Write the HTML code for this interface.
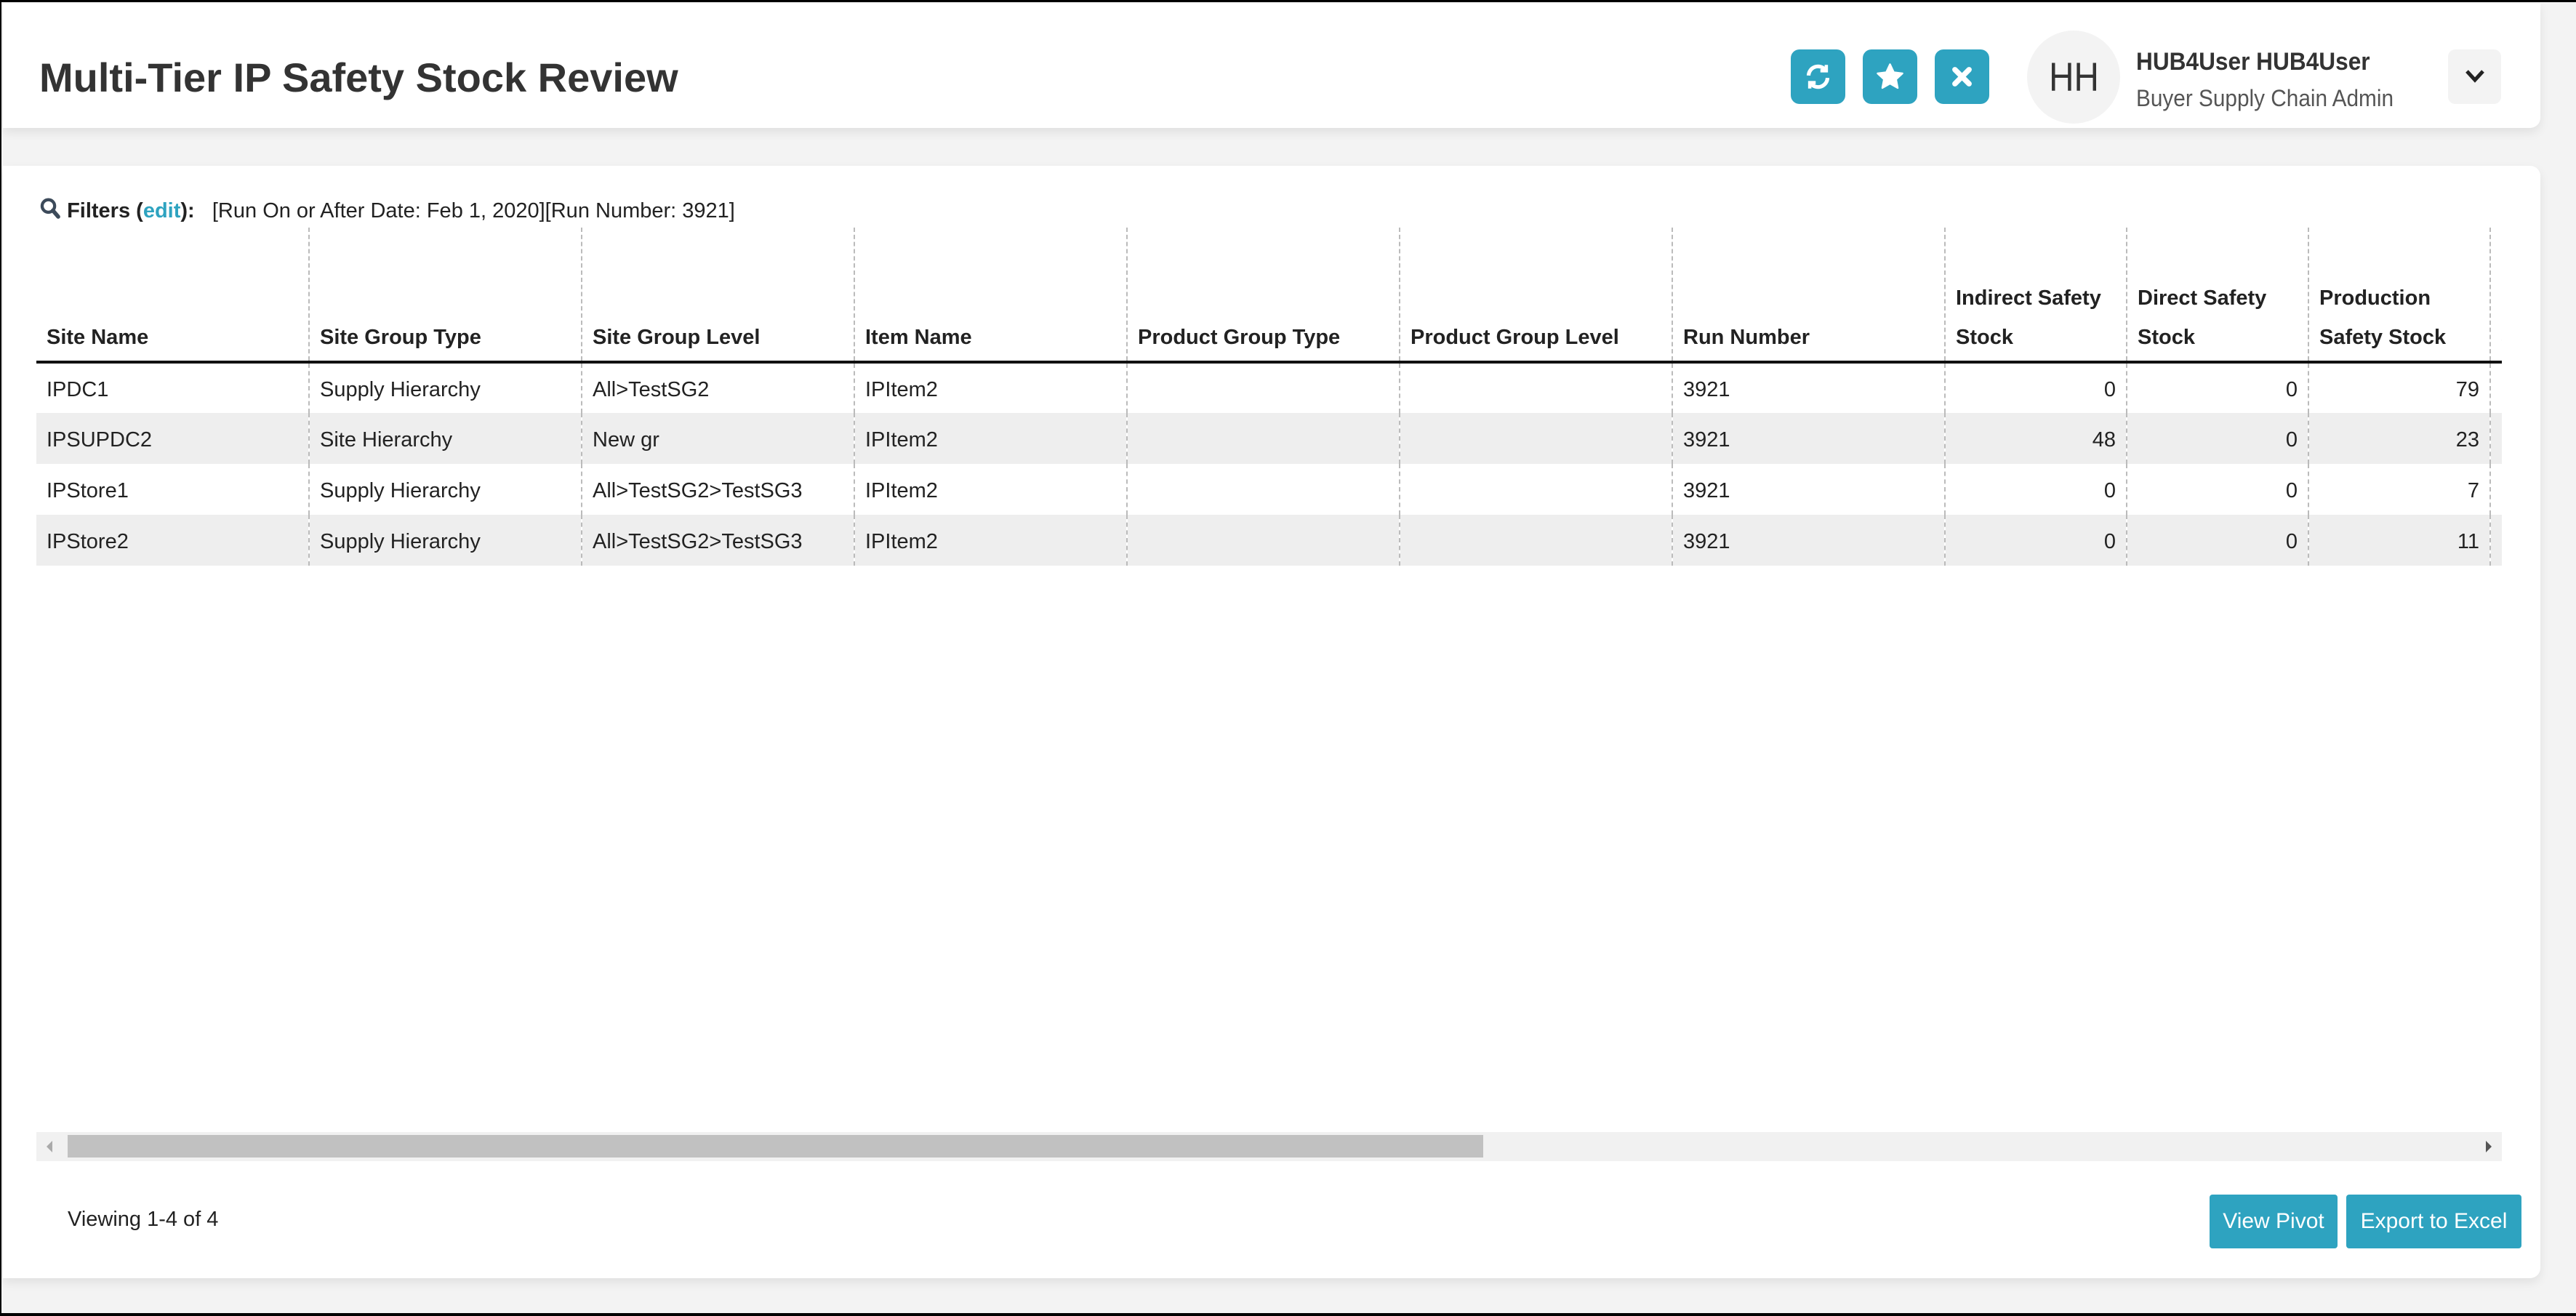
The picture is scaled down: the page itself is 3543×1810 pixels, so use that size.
<!DOCTYPE html>
<html><head><meta charset="utf-8">
<style>
*{box-sizing:border-box;margin:0;padding:0}
html,body{width:3543px;height:1810px;overflow:hidden}
body{background:#f3f3f3;font-family:"Liberation Sans",sans-serif;color:#222;position:relative;border-top:3px solid #000;border-left:2px solid #000;border-bottom:4px solid #000}
.card{position:absolute;background:#fff;box-shadow:0 6px 14px rgba(0,0,0,.08);border-radius:0 0 14px 0}
.sx{display:inline-block;transform-origin:0 50%;white-space:nowrap}
.btn{position:absolute;width:75px;height:75px;border-radius:12px;background:#2ea3c0;top:64px}
.btn svg{position:absolute;left:18px;top:18px}
table{border-collapse:collapse;position:absolute;left:48px;top:310px;table-layout:fixed;width:3625px}
td,th{font-size:29px;padding:0 14px;white-space:nowrap;overflow:hidden;border-right:2px dashed #bbb}
th{height:185px;vertical-align:bottom;text-align:left;font-weight:bold;padding-bottom:5px;line-height:54px;border-bottom:4px solid #111;white-space:normal}
td{height:70px;padding-top:4px}
tr.g td{background:#eee}
.r{text-align:right}
</style></head><body>
<div class="card" style="left:2px;top:1px;width:3490px;height:172px">
  <div style="position:absolute;left:50px;top:70px;font-size:56px;font-weight:bold;color:#333"><span class="sx">Multi-Tier IP Safety Stock Review</span></div>
  <div class="btn" style="left:2459px">
    <svg width="39" height="39" viewBox="0 0 24 24" fill="none" stroke="#fff" stroke-width="3.2"><path d="M4 11a8 8 0 0 1 14-5"/><path d="M20 13a8 8 0 0 1-14 5"/><path d="M19 2v5h-5M5 22v-5h5" stroke-width="2.8"/></svg>
  </div>
  <div class="btn" style="left:2558px">
    <svg width="39" height="39" viewBox="0 0 24 24"><path fill="#fff" stroke="#fff" stroke-width="1.5" stroke-linejoin="round" d="M12 1.5l3.2 6.8 7.3.9-5.4 5 1.4 7.3L12 17.8l-6.5 3.7 1.4-7.3-5.4-5 7.3-.9z"/></svg>
  </div>
  <div class="btn" style="left:2657px">
    <svg width="39" height="39" viewBox="0 0 24 24" stroke="#fff" stroke-width="4.5" stroke-linecap="round"><path d="M6 6l12 12M18 6L6 18"/></svg>
  </div>
  <div style="position:absolute;left:2784px;top:38px;width:128px;height:128px;border-radius:50%;background:#f3f3f3;text-align:center;line-height:128px;font-size:56px;color:#333"><span class="sx" style="transform:scaleX(0.85);transform-origin:50% 50%">HH</span></div>
  <div style="position:absolute;left:2934px;top:62px;font-size:34px;font-weight:bold;color:#333"><span class="sx" style="transform:scaleX(0.93)">HUB4User HUB4User</span></div>
  <div style="position:absolute;left:2934px;top:113px;font-size:32px;color:#555"><span class="sx" style="transform:scaleX(0.93)">Buyer Supply Chain Admin</span></div>
  <div style="position:absolute;left:3363px;top:64px;width:73px;height:75px;border-radius:10px;background:#f3f3f3">
    <svg style="position:absolute;left:22px;top:25px" width="30" height="24" viewBox="0 0 30 24" fill="none" stroke="#222" stroke-width="5"><path d="M4 5l11 12 11-12"/></svg>
  </div>
</div>
<div class="card" style="left:2px;top:225px;width:3490px;height:1530px;border-radius:0 14px 14px 0">
  <div style="position:absolute;left:50px;top:43px;font-size:29px">
    <svg style="vertical-align:-4px" width="30" height="32" viewBox="0 0 24 26"><circle cx="10" cy="10" r="7" fill="none" stroke="#3c4a5a" stroke-width="3.5"/><path d="M15 15l6 7" stroke="#3c4a5a" stroke-width="4.5" stroke-linecap="round"/></svg>
    <span class="sx"><b>Filters (<span style="color:#2ea3c0">edit</span>):</b> &nbsp; [Run On or After Date: Feb 1, 2020][Run Number: 3921]</span>
  </div>
</div>
<div style="position:absolute;left:0;top:0;width:3439px;overflow:hidden;height:1600px">
<table>
<colgroup><col style="width:375px"><col style="width:375px"><col style="width:375px"><col style="width:375px"><col style="width:375px"><col style="width:375px"><col style="width:375px"><col style="width:250px"><col style="width:250px"><col style="width:250px"><col style="width:250px"></colgroup>
<tr><th>Site Name</th><th>Site Group Type</th><th>Site Group Level</th><th>Item Name</th><th>Product Group Type</th><th>Product Group Level</th><th>Run Number</th><th>Indirect Safety Stock</th><th>Direct Safety Stock</th><th>Production Safety Stock</th><th>Safety Stock</th></tr>
<tr><td>IPDC1</td><td>Supply Hierarchy</td><td>All&gt;TestSG2</td><td>IPItem2</td><td></td><td></td><td>3921</td><td class="r">0</td><td class="r">0</td><td class="r">79</td><td></td></tr>
<tr class="g"><td>IPSUPDC2</td><td>Site Hierarchy</td><td>New gr</td><td>IPItem2</td><td></td><td></td><td>3921</td><td class="r">48</td><td class="r">0</td><td class="r">23</td><td></td></tr>
<tr><td>IPStore1</td><td>Supply Hierarchy</td><td>All&gt;TestSG2&gt;TestSG3</td><td>IPItem2</td><td></td><td></td><td>3921</td><td class="r">0</td><td class="r">0</td><td class="r">7</td><td></td></tr>
<tr class="g"><td>IPStore2</td><td>Supply Hierarchy</td><td>All&gt;TestSG2&gt;TestSG3</td><td>IPItem2</td><td></td><td></td><td>3921</td><td class="r">0</td><td class="r">0</td><td class="r">11</td><td></td></tr>
</table>
</div>
<div style="position:absolute;left:48px;top:1554px;width:3391px;height:40px;background:#f1f1f1">
  <div style="position:absolute;left:43px;top:4px;width:1947px;height:31px;background:#c1c1c1"></div>
  <svg style="position:absolute;left:14px;top:12px" width="10" height="16"><path d="M8 0L0 8l8 8z" fill="#aaa"/></svg>
  <svg style="position:absolute;right:14px;top:12px" width="10" height="16"><path d="M2 0l8 8-8 8z" fill="#555"/></svg>
</div>
<div style="position:absolute;left:91px;top:1658px;font-size:29px"><span class="sx">Viewing 1-4 of 4</span></div>
<div style="position:absolute;left:3037px;top:1640px;width:176px;height:74px;background:#2ea3c0;border-radius:4px;color:#fff;font-size:30px;text-align:center;line-height:74px"><span class="sx">View Pivot</span></div>
<div style="position:absolute;left:3225px;top:1640px;width:241px;height:74px;background:#2ea3c0;border-radius:4px;color:#fff;font-size:30px;text-align:center;line-height:74px"><span class="sx">Export to Excel</span></div>
</body></html>
